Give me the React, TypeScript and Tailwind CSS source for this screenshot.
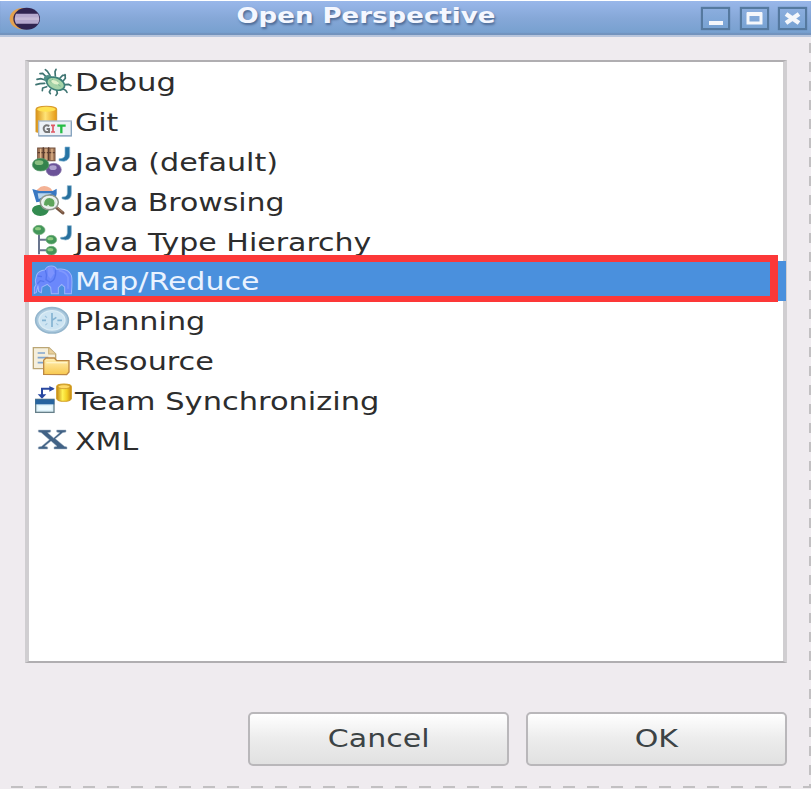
import type { ReactNode } from "react";

function BugIcon() {
  return (
    <>
      <g fill="none" stroke="#3f7472" strokeWidth="5" strokeLinecap="round">
        <path d="M78 50 68 40 60 41M90 46 82 34 76 29M106 48 105 35 108 28M76 60 62 56 51 58M74 70 60 71 48 74M80 80 68 84 67 92M92 88 88 96 91 101M110 90 112 100 108 106M128 86 137 91 141 97M134 74 146 73 153 77M130 62 136 55 135 44M120 54 128 46 136 45" />
      </g>
      <ellipse cx="87" cy="58" rx="16" ry="12" fill="#4f9088" transform="rotate(25 87 58)" />
      <ellipse cx="107" cy="71" rx="28" ry="18" fill="#a5d3a8" stroke="#3d8078" strokeWidth="5" transform="rotate(22 107 71)" />
      <path d="M88 62q15 1 34 17M98 56l-5 12M112 62l-4 14" fill="none" stroke="#7fbb94" strokeWidth="3" />
      <ellipse cx="105" cy="67" rx="12" ry="5" fill="#e0f1cb" transform="rotate(22 105 67)" />
    </>
  );
}

function GitIcon() {
  return (
    <>
      <defs>
        <linearGradient id="gitGold">
          <stop offset="0" stopColor="#d99014" />
          <stop offset=".45" stopColor="#ffe477" />
          <stop offset="1" stopColor="#e69813" />
        </linearGradient>
      </defs>
      <path d="M48 147q0-9 31-9t31 9v67q-31 9-62 0z" fill="url(#gitGold)" stroke="#d69a2b" strokeWidth="3" />
      <ellipse cx="79" cy="147" rx="28" ry="7" fill="#ffe250" />
      <rect x="56" y="182" width="98" height="44" fill="#edf2f7" stroke="#a6b6c6" strokeWidth="4" />
      <path d="M56 227h98V184" fill="none" stroke="#82a2bf" strokeWidth="3" />
      <g fill="none" strokeWidth="6">
        <path d="M88 197q-14-6-17 6-1 14 16 12v-9h-7" stroke="#777" />
        <path d="M99 194v23M93 195h12M93 215h12" stroke="#df5965" strokeWidth="5" />
        <path d="M124 196v23M112 196h25" stroke="#26bd46" strokeWidth="7" />
      </g>
    </>
  );
}

function JavaIcon() {
  return (
    <>
      <path d="M53 263h52v38H53z" fill="#a77c5c" stroke="#73503d" strokeWidth="3" />
      <path d="M70 261v38M86 261v38M53 277h52" stroke="#5b3d2f" strokeWidth="4" />
      <path d="M62 265v34M78 265v34M96 265v34" stroke="#dfb58b" strokeWidth="4" />
      <path d="M135 260h14v24q0 15-17 19l-15-2v-6q18 1 18-13z" fill="#2674a5" stroke="#83b4d2" strokeWidth="2" />
      <ellipse cx="101" cy="328" rx="23" ry="19" fill="#6b5298" stroke="#8d7caf" strokeWidth="2" />
      <ellipse cx="99" cy="322" rx="11" ry="7" fill="#afa2cf" />
      <ellipse cx="62" cy="313" rx="25" ry="19" fill="#34834c" stroke="#67a078" strokeWidth="2" />
      <ellipse cx="57" cy="307" rx="13" ry="7" fill="#8abe80" />
    </>
  );
}

function BrowsingIcon() {
  return (
    <>
      <path d="M53 29q15-17 38-4l9 11H48z" fill="#f4b295" />
      <path d="M37 28 58 34h40l12-7v15q-2 20-23 20L49 68z" fill="#3978c2" />
      <path d="M53 41h43l-40 17z" fill="#b9d6ee" />
      <ellipse cx="61" cy="92" rx="25" ry="17" fill="#338b50" />
      <path d="m107 82 22 18" stroke="#765440" strokeWidth="9" strokeLinecap="round" />
      <path d="m108 80 20 17" stroke="#caa487" strokeWidth="2" />
      <ellipse cx="88" cy="68" rx="27" ry="22" fill="#deedde" stroke="#929a91" strokeWidth="5" />
      <ellipse cx="88" cy="68" rx="22" ry="17" fill="none" stroke="#eef2f4" strokeWidth="4" />
      <path d="M72 76q0-20 16-21 20 2 14 24-6 3-14 0-4-8-7 0z" fill="#5da45b" />
      <path d="M142 18h12v24q0 17-17 18l-11-3v-5q16 1 16-12z" fill="#27709e" stroke="#85b2ca" strokeWidth="2" />
    </>
  );
}

function HierarchyIcon() {
  return (
    <>
      <path d="M57 158v66M57 180h28M57 212h28" stroke="#69758e" strokeWidth="6" fill="none" />
      <g fill="#43965a" stroke="#73af78" strokeWidth="2">
        <ellipse cx="57" cy="151" rx="18" ry="14" />
        <ellipse cx="94" cy="180" rx="16" ry="13" />
        <ellipse cx="94" cy="213" rx="16" ry="13" />
      </g>
      <g fill="#8bca7f">
        <ellipse cx="54" cy="147" rx="9" ry="5" />
        <ellipse cx="91" cy="177" rx="9" ry="5" />
        <ellipse cx="91" cy="210" rx="9" ry="5" />
      </g>
      <path d="M142 138h12v24q0 17-17 19l-15-3v-5q19 1 20-13z" fill="#27709e" stroke="#85b2ca" strokeWidth="2" />
    </>
  );
}

function ElephantIcon() {
  return (
    <>
      <path d="M43 340v-17l5-9-2-12 4-17q5-13 25-15 5-12 19-12 13 0 16 10 34-6 44 18 4 14 0 55h-20v-20l-9-8-10 10v18H94l-2-19-10-9-16 8-2 17-8-4-2-17-5 20z" fill="#6b88fb" stroke="#9db5fb" strokeWidth="3" />
      <path d="M76 270q6 14 2 29l12 8q19-7 17-38M53 288l13 2M52 311l9-9 12 3" fill="none" stroke="#5574ee" strokeWidth="4" />
      <path d="M83 262h15l5 18-11 16-8-8z" fill="#7d93fd" />
      <path d="M116 272q22 3 28 20v34" fill="none" stroke="#7f97fd" strokeWidth="5" />
    </>
  );
}

function ClockIcon() {
  return (
    <>
      <ellipse cx="96" cy="60" rx="49" ry="38" fill="#aac9de" stroke="#94b6cd" strokeWidth="5" />
      <ellipse cx="96" cy="60" rx="39" ry="29" fill="#cde4f2" stroke="#dcedf5" strokeWidth="4" />
      <path d="M96 38v36M66 60h12M112 60h14M96 60l13-9M96 73v7" stroke="#84b3d2" strokeWidth="5" fill="none" />
      <path d="m75 47 6 5M76 74l6-5M115 74l-6-5" stroke="#9cc3dc" strokeWidth="3" />
    </>
  );
}

function ResourceIcon() {
  return (
    <>
      <defs>
        <linearGradient id="folderFill" x1="0" y1="0" x2="0" y2="1">
          <stop offset="0" stopColor="#fff0b6" />
          <stop offset="1" stopColor="#f8c84e" />
        </linearGradient>
      </defs>
      <path d="M40 142h47l20 19v44H40z" fill="#f5efdc" stroke="#bba675" strokeWidth="4" />
      <path d="M86 142v19h21" fill="#ead09b" stroke="#c9b078" strokeWidth="3" />
      <path d="M53 158h22M53 172h32M53 187h25" stroke="#81a6cf" strokeWidth="5" />
      <path d="M71 222v-42l7-7h25l7 8h37v34l-7 8z" fill="url(#folderFill)" stroke="#bd8845" strokeWidth="4" />
      <path d="M79 187h62" stroke="#fff4c7" strokeWidth="4" />
    </>
  );
}

function TeamIcon() {
  return (
    <>
      <defs>
        <linearGradient id="teamGold">
          <stop offset="0" stopColor="#c38415" />
          <stop offset=".4" stopColor="#fff253" />
          <stop offset=".7" stopColor="#f3cf24" />
          <stop offset="1" stopColor="#c78714" />
        </linearGradient>
      </defs>
      <path d="M66 291v-24h34" fill="none" stroke="#2948a0" strokeWidth="6" />
      <path d="m88 259 16 8-16 9zM53 284h26l-13 13z" fill="#2948a0" />
      <rect x="47" y="299" width="55" height="39" fill="#def2fa" stroke="#667f89" strokeWidth="4" />
      <path d="M46 299h57v15H46z" fill="#27649f" />
      <path d="M55 319h40v12H55z" fill="#effcff" />
      <path d="M110 261q0-8 22-8t22 8v36q-4 8-22 8t-22-8z" fill="url(#teamGold)" stroke="#d3a026" strokeWidth="3" />
      <ellipse cx="132" cy="261" rx="18" ry="6" fill="#ffda66" stroke="#c18c25" strokeWidth="2" />
    </>
  );
}

function XmlIcon() {
  return (
    <path d="M55 391h37v6l-9 2 18 16 18-16-9-2v-6h28v6l-10 2-22 18 27 23 8 2v6h-39v-6l9-2-18-16-19 16 9 2v6H55v-6l10-2 23-20-24-21-9-2z" fill="#416285" stroke="#a6b7c6" strokeWidth="1.5" />
  );
}

type Perspective = { label: string; view: string; icon: ReactNode; stretch: string; selected?: boolean };

const perspectives: Perspective[] = [
  { label: "Debug", view: "27 6 138 119", icon: <BugIcon />, stretch: "scale-x-[1.28]" },
  { label: "Git", view: "27 125 138 119", icon: <GitIcon />, stretch: "scale-x-[1.25]" },
  { label: "Java (default)", view: "27 245 138 119", icon: <JavaIcon />, stretch: "scale-x-[1.257]" },
  { label: "Java Browsing", view: "27 4 138 119", icon: <BrowsingIcon />, stretch: "scale-x-[1.247]" },
  { label: "Java Type Hierarchy", view: "27 124 138 119", icon: <HierarchyIcon />, stretch: "scale-x-[1.25]" },
  { label: "Map/Reduce", view: "27 243 138 119", icon: <ElephantIcon />, stretch: "scale-x-[1.25]", selected: true },
  { label: "Planning", view: "27 2 138 119", icon: <ClockIcon />, stretch: "scale-x-[1.26]" },
  { label: "Resource", view: "27 122 138 119", icon: <ResourceIcon />, stretch: "scale-x-[1.262]" },
  { label: "Team Synchronizing", view: "27 241 138 119", icon: <TeamIcon />, stretch: "scale-x-[1.27]" },
  { label: "XML", view: "27 361 138 119", icon: <XmlIcon />, stretch: "scale-x-[1.25]" },
];

function WindowButton({ children }: { children: ReactNode }) {
  return (
    <button className="h-[23px] w-[29px] border-2 border-[#55799f] bg-gradient-to-b from-[#8badde] to-[#78a3d3] shadow-[0_0_1px_#55799f]">
      <svg viewBox="0 0 25 19" className="h-[19px] w-[25px]" fill="none" stroke="#f5f7fb">
        {children}
      </svg>
    </button>
  );
}

function DialogButton({ label }: { label: string }) {
  return (
    <button className="flex h-[54px] w-[261px] items-center justify-center rounded-[5px] border-2 border-[#b9b7ba] bg-gradient-to-b from-white via-[#ececec] to-[#e1e1e1] text-[24px] leading-none text-[#3c4345]">
      <span className="scale-x-[1.25]">{label}</span>
    </button>
  );
}

export default function App() {
  return (
    <div className="flex h-[789px] w-[811px] flex-col overflow-hidden bg-[#efebef] font-['DejaVu_Sans',sans-serif]">
      <header className="flex h-[37px] shrink-0 items-center border-t border-b-2 border-t-white border-b-[#b8c5dc] bg-gradient-to-b from-[#99b7ea] via-[#86a8d8] to-[#759fce] pr-[4px] pl-[9px] shadow-[inset_0_-2px_1px_#7393bd]">
        <svg viewBox="27 15 96 75" className="h-[25px] w-[32px]">
          <ellipse cx="68" cy="53" rx="39" ry="32" fill="#e3a14e" />
          <ellipse cx="80" cy="53" rx="40" ry="33" fill="#302450" />
          <path d="M48 38h66q8 15 0 30H48q-8-15 0-30z" fill="#b6a9cd" />
          <path d="M46 53h71" stroke="#c6bad6" strokeWidth="8" />
        </svg>
        <h1 className="flex-1 pr-[11px] pb-[4px] text-center text-[20.5px] leading-none font-bold text-[#f4f7ff] [text-shadow:1px_2px_2px_#4d6a95]">
          <span className="inline-block scale-x-[1.27]">Open Perspective</span>
        </h1>
        <div className="flex gap-[9.5px]">
          <WindowButton><path d="M6 14h14" strokeWidth="4" /></WindowButton>
          <WindowButton><path d="M6 5h13v9H6z" strokeWidth="3" /><path d="M5 5h15" strokeWidth="4" /></WindowButton>
          <WindowButton><path d="m6 5 13 9M19 5 6 14" strokeWidth="4.5" /></WindowButton>
        </div>
      </header>
      <div className="flex min-h-0 flex-1">
        <main className="flex flex-1 flex-col pt-[23px] pl-[25px]">
          <ul className="relative h-[603px] w-[762px] shrink-0 border-x-4 border-y-2 border-x-[#d0ced1] border-y-[#b0aeb1] bg-white">
            {perspectives.map((item) => (
              <li
                key={item.label}
                className={`flex h-[39.8px] items-center text-[24px] leading-none whitespace-nowrap ${item.selected ? "-mr-[3px] bg-[#4a90dd] text-[#eaf3ff]" : "text-[#2d2d2d]"}`}
              >
                <svg viewBox={item.view} preserveAspectRatio="none" className="h-[39.7px] w-[46px] shrink-0">
                  {item.icon}
                </svg>
                <span className={`origin-left pt-[3px] ${item.stretch}`}>{item.label}</span>
              </li>
            ))}
            <li aria-hidden="true" className="absolute top-[193px] -left-[5px] h-[47px] w-[754px] border-x-8 border-t-[7px] border-b-[6px] border-[#fc3838]" />
          </ul>
          <footer className="mt-[49px] flex w-[762px] justify-end gap-[17px]">
            <DialogButton label="Cancel" />
            <DialogButton label="OK" />
          </footer>
        </main>
        <div className="mt-[6px] w-[2px] shrink-0 bg-[repeating-linear-gradient(to_bottom,#c2c0c2_0px,#c2c0c2_10px,transparent_10px,transparent_19px)]" />
      </div>
      <div className="mb-px ml-[11px] h-[2px] shrink-0 bg-[repeating-linear-gradient(to_right,#c2c0c2_0px,#c2c0c2_12px,transparent_12px,transparent_24px)]" />
    </div>
  );
}
